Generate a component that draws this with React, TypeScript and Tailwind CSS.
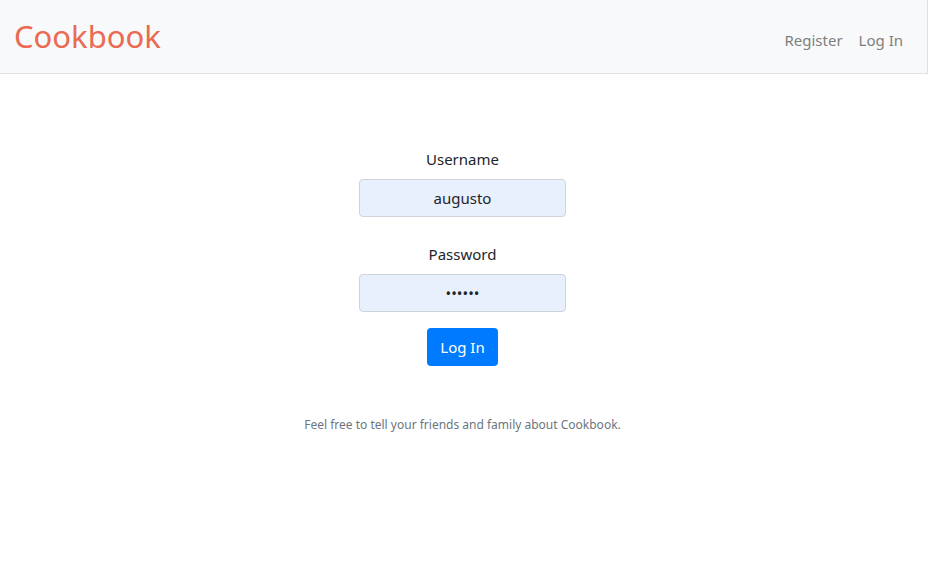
import React from 'react';

const font = { fontFamily: '"Segoe UI", "Noto Sans", "Open Sans", sans-serif' };

const NavLink = ({ label }: { label: string }) => (
  <a href="#" className="px-2 py-2 text-[15px] text-[#7f7f7f] hover:text-[#555]">
    {label}
  </a>
);

const App: React.FC = () => {
  return (
    <div className="min-h-[578px] bg-white text-[#212529]" style={font}>
      {/* navbar */}
      <header className="h-[74px] bg-[#f8f9fa] border-b border-r border-[#dee2e6] flex items-center justify-between pl-[14px] pr-[16px]">
        <a href="#" className="text-[31px] leading-none text-[#ea6a52]">
          Cookbook
        </a>
        <nav className="flex items-center pt-[7px]">
          <NavLink label="Register" />
          <NavLink label="Log In" />
        </nav>
      </header>

      {/* login form */}
      <main className="flex flex-col items-center pt-[73px] pr-[3px]">
        <form className="flex flex-col items-center" onSubmit={(e) => e.preventDefault()}>
          <label className="text-[15px] leading-6 mb-[8px]">Username</label>
          <input
            defaultValue="augusto"
            className="w-[207px] h-[38px] rounded-[4px] border border-[#ced4da] bg-[#e8f0fe] text-center text-[15px] outline-none"
          />
          <label className="text-[15px] leading-6 mt-[25px] mb-[8px]">Password</label>
          <input
            type="password"
            defaultValue="secret"
            className="w-[207px] h-[38px] rounded-[4px] border border-[#ced4da] bg-[#e8f0fe] text-center text-[15px] outline-none"
          />
          <button
            type="submit"
            className="mt-[16px] h-[38px] px-[13px] rounded-[4px] bg-[#007bff] text-white text-[15px]"
          >
            Log In
          </button>
        </form>

        <p className="mt-[50px] text-[12px] text-[#6c757d]">
          Feel free to tell your friends and family about Cookbook.
        </p>
      </main>
    </div>
  );
};

export default App;
